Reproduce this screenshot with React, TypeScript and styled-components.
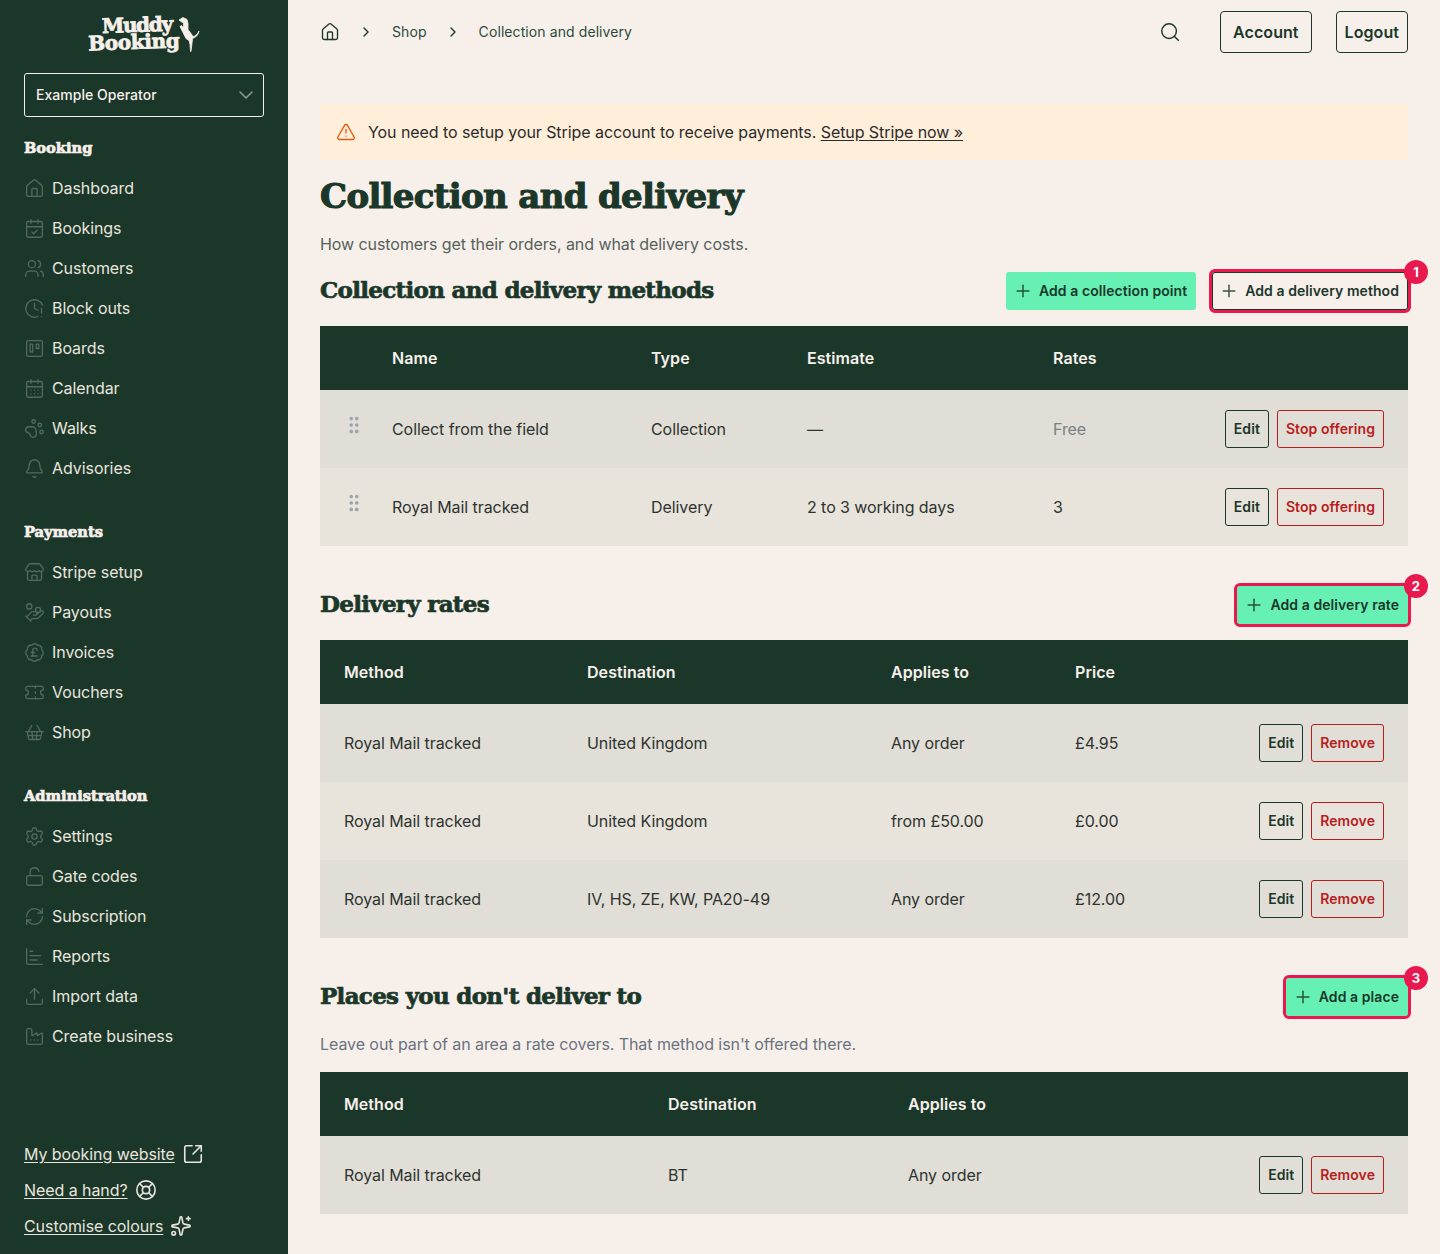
import * as React from "react";
import styled, { createGlobalStyle } from "styled-components";
import {
  House, CalendarCheck, Users, ClockAlert, Trello, CalendarDays, PawPrint, Bell, Store, HandCoins,
  BadgePoundSterling, Ticket, ShoppingBasket, Settings, LockOpen, RefreshCw, ChartBar,
  Upload, Factory, SquareArrowOutUpRight, LifeBuoy, Sparkles, ChevronDown, ChevronRight, Search,
  Plus, GripVertical, TriangleAlert,
} from "lucide-react";

const green = "#1b372a";
const cream = "#f7f0ea";
const display = `"DejaVu Serif", "Liberation Serif", serif`;

const GlobalStyle = createGlobalStyle`
  html, body { margin: 0; padding: 0; }
  body {
    background: ${cream};
    color: ${green};
    font-family: Inter, "Liberation Sans", sans-serif;
    font-size: 16px;
    letter-spacing: -0.07px;
  }
  * { box-sizing: border-box; }
`;

const Page = styled.div`
  display: flex;
  width: 1440px;
  height: 1254px;
  overflow: hidden;
`;

const Sidebar = styled.aside`
  width: 288px;
  flex: none;
  background: ${green};
  color: ${cream};
  padding: 0 24px;
  display: flex;
  flex-direction: column;
`;

const Logo = styled.div`
  height: 73px;
  padding-top: 16px;
  display: flex;
  justify-content: center;
  align-items: flex-start;
`;

const LogoText = styled.div`
  display: flex;
  flex-direction: column;
  align-items: flex-end;
  padding-top: 1px;
  font-family: ${display};
  font-weight: 700;
  font-size: 20px;
  line-height: 17px;
  -webkit-text-stroke: 0.8px ${cream};
  transform: rotate(-2deg);
`;

const LogoLine = styled.span<{ $shift?: number; $track: number }>`
  margin-right: ${props => props.$shift || 0}px;
  letter-spacing: ${props => props.$track}px;
`;

const OperatorSelect = styled.div`
  height: 44px;
  border: 1px solid ${cream};
  border-radius: 3px;
  padding: 0 5px 2px 11px;
  display: flex;
  align-items: center;
  justify-content: space-between;
  font-size: 14px;
  font-weight: 500;
  letter-spacing: 0.03px;
  svg { color: #8e9a94; margin-top: 2px; }
`;

const NavTitle = styled.div<{ $first?: boolean }>`
  font-family: ${display};
  font-weight: 700;
  font-size: 14.7px;
  line-height: 20px;
  letter-spacing: -0.05px;
  -webkit-text-stroke: 0.7px ${cream};
  margin-top: ${props => props.$first ? "21px" : "34px"};
  margin-bottom: 10px;
`;

const NavList = styled.nav`
  display: flex;
  flex-direction: column;
`;

const NavItem = styled.a`
  height: 40px;
  display: flex;
  align-items: center;
  gap: 7px;
  font-size: 16px;
  color: #e9e5de;
  svg {
    color: #54695f;
    flex: none;
  }
`;

const BottomLinks = styled.div`
  margin-top: auto;
  padding-bottom: 16px;
  display: flex;
  flex-direction: column;
  gap: 12px;
`;

const BottomLink = styled.a`
  height: 24px;
  display: flex;
  align-items: center;
  gap: 7px;
  font-size: 16px;
  color: #e9e5de;
  span { text-decoration: underline; text-underline-offset: 2px; }
`;

const Main = styled.main`
  flex: 1;
  min-width: 0;
  padding: 0 32px;
`;

const TopBar = styled.header`
  height: 64px;
  display: flex;
  align-items: center;
  justify-content: space-between;
`;

const Crumbs = styled.div`
  display: flex;
  align-items: center;
  gap: 18px;
  padding-bottom: 1px;
  font-size: 14px;
  letter-spacing: 0.09px;
  color: #2c4a3c;
  svg { color: ${green}; flex: none; }
`;

const TopActions = styled.div`
  display: flex;
  align-items: center;
`;

const SearchButton = styled.span`
  display: flex;
  margin-right: 39px;
`;

const TopButton = styled.button<{ $gap?: number; $pad: number }>`
  height: 42px;
  padding: 0 ${props => props.$pad}px;
  margin-left: ${props => props.$gap || 0}px;
  background: transparent;
  border: 1px solid ${green};
  border-radius: 4px;
  font: 600 16px Inter, "Liberation Sans", sans-serif;
  letter-spacing: 0.07px;
  color: ${green};
`;

const Notice = styled.div`
  margin-top: 40px;
  height: 56px;
  background: #ffeeda;
  border-radius: 3px;
  padding: 0 16px;
  display: flex;
  align-items: center;
  gap: 12px;
  font-size: 16px;
  color: #2b2b2b;
  svg { color: #ea580c; flex: none; }
  a { text-decoration: underline; text-underline-offset: 2px; }
`;

const Title = styled.h1`
  font-family: ${display};
  font-weight: 700;
  font-size: 34px;
  line-height: 44px;
  letter-spacing: -0.68px;
  -webkit-text-stroke: 1.1px ${green};
  margin: 14px 0 0;
`;

const Lead = styled.p`
  margin: 14px 0 0;
  font-size: 16px;
  line-height: 24px;
  color: #56615c;
`;

const SectionHead = styled.div<{ $top: number }>`
  margin-top: ${props => props.$top}px;
  height: 38px;
  display: flex;
  align-items: center;
  justify-content: space-between;
`;

const SectionTitle = styled.h2`
  font-family: ${display};
  font-weight: 700;
  font-size: 23px;
  letter-spacing: -0.7px;
  -webkit-text-stroke: 0.7px ${green};
  margin: 0 0 4px;
`;

const SectionActions = styled.div`
  display: flex;
  gap: 16px;
`;

const AddButton = styled.button<{ $outline?: boolean; $mark?: boolean }>`
  position: relative;
  height: 38px;
  padding: 0 9px 1px 7px;
  display: flex;
  align-items: center;
  gap: 6px;
  border-radius: 3px;
  border: none;
  box-shadow: ${props => props.$outline ? `inset 0 0 0 1px ${green}` : "none"};
  background: ${props => props.$outline ? "transparent" : "#66f0b4"};
  color: ${green};
  font: 600 14px Inter, "Liberation Sans", sans-serif;
  letter-spacing: 0.07px;
  white-space: nowrap;
  outline: ${props => props.$mark ? "3px solid #e8194f" : "none"};
  svg { opacity: 0.85; margin-top: 1px; }
`;

const Badge = styled.span`
  position: absolute;
  top: -12px;
  right: -20px;
  width: 24px;
  height: 24px;
  border-radius: 50%;
  background: #e8194f;
  color: #fff;
  display: flex;
  align-items: center;
  justify-content: center;
  font-size: 13px;
  font-weight: 700;
`;

const Table = styled.table`
  width: 100%;
  margin-top: 16px;
  border-collapse: collapse;
  table-layout: fixed;
`;

const HeadCell = styled.th`
  height: 64px;
  background: ${green};
  color: ${cream};
  padding: 0 24px;
  text-align: left;
  font-size: 16px;
  font-weight: 600;
  letter-spacing: 0.06px;
`;

const Row = styled.tr`
  height: 78px;
  background: #e8e4dc;
  &:nth-child(odd) { background: #e0ded6; }
`;

const Cell = styled.td<{ $muted?: boolean }>`
  padding: 0 24px;
  font-size: 16px;
  color: ${props => props.$muted ? "#7a8085" : "#2e332f"};
`;

const GripCell = styled.td`
  padding: 0 0 0 23px;
  color: #9ca3af;
  svg { display: block; margin-top: -8px; }
`;

const RateLine = styled.div`
  display: flex;
  align-items: center;
  justify-content: space-between;
`;

const RowActions = styled.div`
  display: flex;
  justify-content: flex-end;
  gap: 8px;
`;

const SmallButton = styled.button<{ $danger?: boolean }>`
  height: 38px;
  padding: 0 8px 2px;
  background: transparent;
  border: 1px solid ${props => props.$danger ? "#b91c1c" : green};
  border-radius: 3px;
  color: ${props => props.$danger ? "#b91c1c" : green};
  font: 600 14px Inter, "Liberation Sans", sans-serif;
  letter-spacing: 0.07px;
`;

const Note = styled.p`
  margin: 16px 0 0;
  font-size: 16px;
  line-height: 24px;
  color: #6b7280;
`;

const navGroups = [
  { title: "Booking", items: [
    [House, "Dashboard"], [CalendarCheck, "Bookings"], [Users, "Customers"], [ClockAlert, "Block outs"],
    [Trello, "Boards"], [CalendarDays, "Calendar"], [PawPrint, "Walks"], [Bell, "Advisories"],
  ] },
  { title: "Payments", items: [
    [Store, "Stripe setup"], [HandCoins, "Payouts"], [BadgePoundSterling, "Invoices"], [Ticket, "Vouchers"], [ShoppingBasket, "Shop"],
  ] },
  { title: "Administration", items: [
    [Settings, "Settings"], [LockOpen, "Gate codes"], [RefreshCw, "Subscription"], [ChartBar, "Reports"], [Upload, "Import data"], [Factory, "Create business"],
  ] },
] as const;

const methods = [
  { name: "Collect from the field", type: "Collection", estimate: "—", rates: "Free" },
  { name: "Royal Mail tracked", type: "Delivery", estimate: "2 to 3 working days", rates: "3" },
];

const rates = [
  ["Royal Mail tracked", "United Kingdom", "Any order", "£4.95"],
  ["Royal Mail tracked", "United Kingdom", "from £50.00", "£0.00"],
  ["Royal Mail tracked", "IV, HS, ZE, KW, PA20-49", "Any order", "£12.00"],
];

const Widths = ({ list }: { list: number[] }) => (
  <colgroup>
    {list.map((w, i) => <col key={i} style={{ width: w }} />)}
  </colgroup>
);

const Dog = () => (
  <svg width="22" height="36" viewBox="0 0 22 36" fill={cream} stroke={cream} strokeWidth="0.8" strokeLinejoin="round" style={{ marginLeft: -2, marginTop: 1, flex: "none" }}>
    <path d="M1 3L4 1l1-.5 4 2 1 4v6l3 4 2 3c2 0 4.500-2 6-5.500-.5 4-3.500 6.500-6.500 7.500l-.5 5-1 8h-.5l-.5-7-1-4-3-2-3-6-3-6 1.500-1L5.500 11V6L3 4.500z" />
  </svg>
);

const RowRates = ({ rates, remove }: { rates: string; remove?: boolean }) => (
  <RateLine>
    {rates}
    <RowActions>
      <SmallButton>Edit</SmallButton>
      <SmallButton $danger>{remove ? "Remove" : "Stop offering"}</SmallButton>
    </RowActions>
  </RateLine>
);

export default function App() {
  return (
    <Page>
      <GlobalStyle />
      <Sidebar>
        <Logo>
          <LogoText>
            <LogoLine $shift={7} $track={-1.3}>Muddy</LogoLine>
            <LogoLine $track={-0.35}>Booking</LogoLine>
          </LogoText>
          <Dog />
        </Logo>
        <OperatorSelect>
          Example Operator
          <ChevronDown size={24} strokeWidth={1.5} />
        </OperatorSelect>
        {navGroups.map((g, gi) => (
          <React.Fragment key={g.title}>
            <NavTitle $first={gi === 0}>{g.title}</NavTitle>
            <NavList>
              {g.items.map(([Icon, label]) => (
                <NavItem key={label}><Icon size={21} strokeWidth={1.5} />{label}</NavItem>
              ))}
            </NavList>
          </React.Fragment>
        ))}
        <BottomLinks>
          <BottomLink><span>My booking website</span><SquareArrowOutUpRight size={22} strokeWidth={1.75} /></BottomLink>
          <BottomLink><span>Need a hand?</span><LifeBuoy size={22} strokeWidth={1.75} /></BottomLink>
          <BottomLink><span>Customise colours</span><Sparkles size={22} strokeWidth={1.75} /></BottomLink>
        </BottomLinks>
      </Sidebar>
      <Main>
        <TopBar>
          <Crumbs>
            <House size={20} strokeWidth={1.6} />
            <ChevronRight size={16} />
            <span>Shop</span>
            <ChevronRight size={16} />
            <span>Collection and delivery</span>
          </Crumbs>
          <TopActions>
            <SearchButton><Search size={22} strokeWidth={1.6} /></SearchButton>
            <TopButton $pad={12}>Account</TopButton>
            <TopButton $pad={8} $gap={24}>Logout</TopButton>
          </TopActions>
        </TopBar>
        <Notice>
          <TriangleAlert size={20} strokeWidth={1.6} />
          <div>You need to setup your Stripe account to receive payments. <a>Setup Stripe now »</a></div>
        </Notice>
        <Title>Collection and delivery</Title>
        <Lead>How customers get their orders, and what delivery costs.</Lead>

        <SectionHead $top={16}>
          <SectionTitle>Collection and delivery methods</SectionTitle>
          <SectionActions>
            <AddButton><Plus size={20} strokeWidth={1.8} />Add a collection point</AddButton>
            <AddButton $outline $mark><Plus size={20} strokeWidth={1.8} />Add a delivery method<Badge>1</Badge></AddButton>
          </SectionActions>
        </SectionHead>
        <Table>
          <Widths list={[48, 259, 156, 246, 379]} />
          <thead>
            <tr><HeadCell /><HeadCell>Name</HeadCell><HeadCell>Type</HeadCell><HeadCell>Estimate</HeadCell><HeadCell>Rates</HeadCell></tr>
          </thead>
          <tbody>
            {methods.map(m => (
              <Row key={m.name}>
                <GripCell><GripVertical size={22} strokeWidth={2} /></GripCell>
                <Cell>{m.name}</Cell>
                <Cell>{m.type}</Cell>
                <Cell>{m.estimate}</Cell>
                <Cell $muted={m.rates === "Free"}>
                  <RowRates rates={m.rates} />
                </Cell>
              </Row>
            ))}
          </tbody>
        </Table>

        <SectionHead $top={40}>
          <SectionTitle>Delivery rates</SectionTitle>
          <AddButton $mark><Plus size={20} strokeWidth={1.8} />Add a delivery rate<Badge>2</Badge></AddButton>
        </SectionHead>
        <Table>
          <Widths list={[243, 304, 184, 357]} />
          <thead>
            <tr><HeadCell>Method</HeadCell><HeadCell>Destination</HeadCell><HeadCell>Applies to</HeadCell><HeadCell>Price</HeadCell></tr>
          </thead>
          <tbody>
            {rates.map((r, i) => (
              <Row key={i}>
                <Cell>{r[0]}</Cell>
                <Cell>{r[1]}</Cell>
                <Cell>{r[2]}</Cell>
                <Cell><RowRates rates={r[3]} remove /></Cell>
              </Row>
            ))}
          </tbody>
        </Table>

        <SectionHead $top={40}>
          <SectionTitle>Places you don't deliver to</SectionTitle>
          <AddButton $mark><Plus size={20} strokeWidth={1.8} />Add a place<Badge>3</Badge></AddButton>
        </SectionHead>
        <Note>Leave out part of an area a rate covers. That method isn't offered there.</Note>
        <Table>
          <Widths list={[324, 240, 524]} />
          <thead>
            <tr><HeadCell>Method</HeadCell><HeadCell>Destination</HeadCell><HeadCell>Applies to</HeadCell></tr>
          </thead>
          <tbody>
            <Row>
              <Cell>Royal Mail tracked</Cell>
              <Cell>BT</Cell>
              <Cell><RowRates rates="Any order" remove /></Cell>
            </Row>
          </tbody>
        </Table>
      </Main>
    </Page>
  );
}
